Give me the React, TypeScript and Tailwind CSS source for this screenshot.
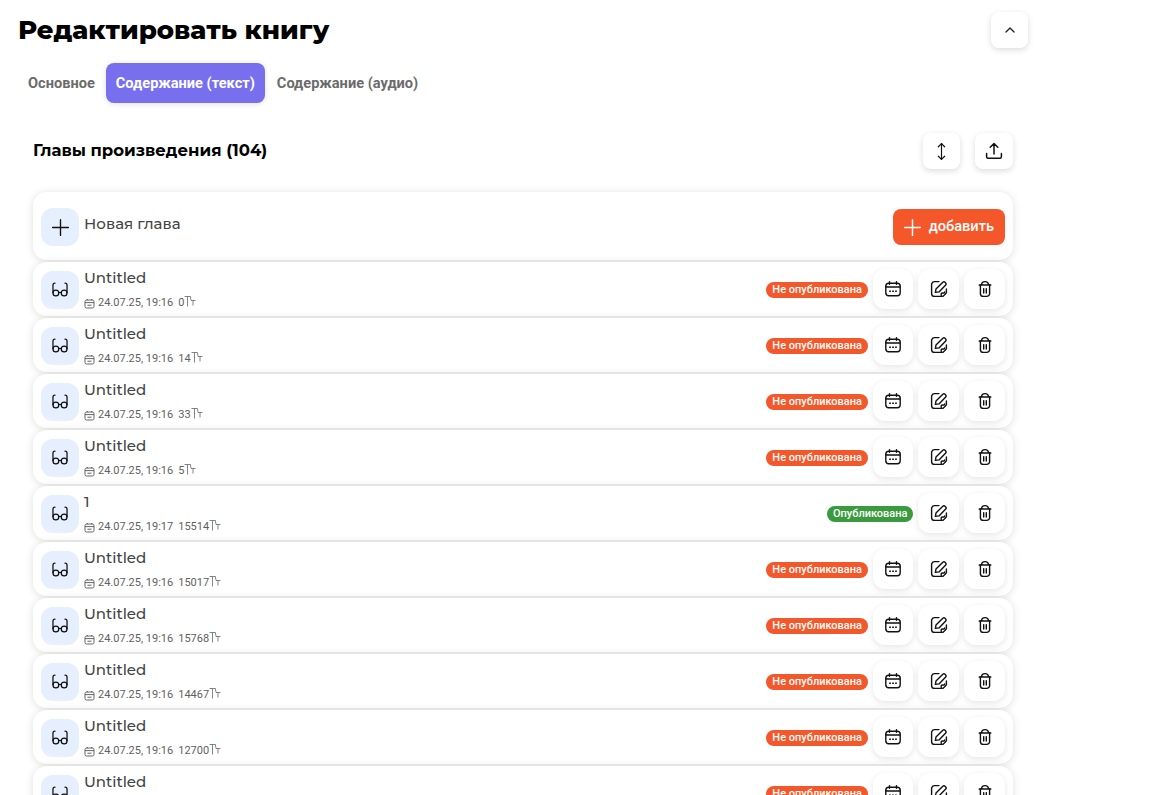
import React from 'react';
import { ChevronUp, Plus, MoveVertical } from 'lucide-react';

const chapters = [
  { title: 'Untitled', time: '19:16', count: '0', published: false },
  { title: 'Untitled', time: '19:16', count: '14', published: false },
  { title: 'Untitled', time: '19:16', count: '33', published: false },
  { title: 'Untitled', time: '19:16', count: '5', published: false },
  { title: '1', time: '19:17', count: '15514', published: true },
  { title: 'Untitled', time: '19:16', count: '15017', published: false },
  { title: 'Untitled', time: '19:16', count: '15768', published: false },
  { title: 'Untitled', time: '19:16', count: '14467', published: false },
  { title: 'Untitled', time: '19:16', count: '12700', published: false },
  { title: 'Untitled', time: '19:16', count: '9120', published: false },
];

const CalendarIcon = () => (
  <svg width="18" height="18" viewBox="0 0 18 18" fill="none" stroke="currentColor" strokeWidth="1.4" strokeLinecap="round">
    <rect x="1.8" y="3.2" width="14.4" height="12.6" rx="3" />
    <path d="M2 7h14M5.5 1.6v2.6M12.5 1.6v2.6" />
    <path d="M6 11.2h.01M9 11.2h.01M12 11.2h.01" strokeWidth="1.8" />
  </svg>
);

const EditIcon = () => (
  <svg width="18" height="18" viewBox="0 0 18 18" fill="none" stroke="currentColor" strokeWidth="1.4" strokeLinecap="round" strokeLinejoin="round">
    <path d="M9 1.6H4.600a3 3 0 0 0-3 3v8.800a3 3 0 0 0 3 3h6.600" />
    <path d="M5.400 12.400l.6-3.400 6.800-6.800a1.600 1.600 0 0 1 2.200 0l.7.7a1.600 1.600 0 0 1 0 2.200L9 11.900z" />
    <path d="M16.400 9v3.200c0 .6-.2 1-.6 1.400l-2.400 2.300c-.4.4-.8.5-1.200.5-.6 0-1-.5-1-1.100v-1.100c0-.7.5-1.200 1.200-1.200h1.100c.6 0 1.100-.4 1.100-1" />
  </svg>
);

const TrashIcon = () => (
  <svg width="18" height="18" viewBox="0 0 18 18" fill="none" stroke="currentColor" strokeWidth="1.4" strokeLinecap="round" strokeLinejoin="round">
    <path d="M3.200 5h11.600M5.600 5c0-2 1.400-3.400 3.400-3.400S12.400 3 12.400 5" />
    <path d="M4.400 5v8.400a3 3 0 0 0 3 3h3.200a3 3 0 0 0 3-3V5" />
    <path d="M7.700 8.600v4.400M10.300 8.600v4.400" />
  </svg>
);

const GlassesIcon = () => (
  <svg width="18" height="18" viewBox="0 0 20 20" fill="none" stroke="currentColor" strokeWidth="1.4" strokeLinecap="round" strokeLinejoin="round">
    <path d="M2.200 13V4.600c0-1.400.8-2.200 2.200-2.200M17.800 13V4.600c0-1.400-.8-2.200-2.200-2.200" />
    <circle cx="5.400" cy="13.400" r="3.200" />
    <circle cx="14.600" cy="13.400" r="3.200" />
    <path d="M8.600 13c.9-.6 1.900-.6 2.800 0" />
  </svg>
);

const UploadIcon = () => (
  <svg width="20" height="20" viewBox="0 0 20 20" fill="none" stroke="currentColor" strokeWidth="1.5" strokeLinecap="round" strokeLinejoin="round">
    <path d="M10 13V2.500M6.200 6.200L10 2.500l3.800 3.700" />
    <path d="M2.600 12.500v3.200c0 .9.600 1.500 1.500 1.500h11.800c.9 0 1.500-.6 1.500-1.500v-3.200" />
  </svg>
);

const SmallCalendar = () => (
  <svg width="11" height="11" viewBox="0 0 11 11" fill="none" stroke="#555" strokeWidth="0.9" className="shrink-0">
    <rect x="1" y="2" width="9" height="8" rx="1.600" />
    <path d="M1 4.600h9M3.200 1v1.400M7.800 1v1.400M3.500 7.200h4" />
  </svg>
);

const SignIcon = () => (
  <svg width="12" height="13" viewBox="0 0 12 13" fill="none" stroke="#666" strokeWidth="0.8" className="-mt-[4px] shrink-0">
    <path d="M0.500 1.500h6M3.500 1.500v10M6.500 1.500c0 2 .3 3.500 1 4M6.800 5.500h4.700M9 5.500v5" />
  </svg>
);

const ActionButton = ({ children, narrow }: { children: React.ReactNode; narrow?: boolean }) => (
  <button
    className={`flex h-10 items-center justify-center rounded-xl bg-white text-[#111] shadow-[0_2px_6px_rgba(0,0,0,0.1)] ${
      narrow ? 'w-10' : 'w-[41px]'
    }`}
  >
    {children}
  </button>
);

const ChapterRow = ({ title, time, count, published }: (typeof chapters)[number]) => (
  <div className="flex h-[54px] shrink-0 items-center rounded-[14px] bg-white px-2 shadow-[0_1px_8px_rgba(0,0,0,0.13)]">
    <div className="mt-[2px] flex h-[38px] w-[38px] shrink-0 items-center justify-center rounded-xl bg-[#e6effd] text-[#111]">
      <GlassesIcon />
    </div>
    <div className="ml-[5px] flex h-[54px] flex-col">
      <div className="mt-[6px] font-['Montserrat','Inter',sans-serif] text-[15px] leading-5 font-medium text-[#444]">{title}</div>
      <div className="mt-[7px] flex items-center gap-[3px] text-[11px] leading-4 text-[#5f5f5f]">
        <SmallCalendar />
        <span className="mr-[2px]">24.07.25, {time}</span>
        <span className="flex items-center">
          {count}
          <SignIcon />
        </span>
      </div>
    </div>
    <div className="ml-auto flex items-center gap-[5px]">
      <span
        className={`mt-[1px] rounded-full text-[11px] leading-4 font-medium text-white ${
          published ? 'bg-[#3a9a3e] px-[5.5px]' : 'bg-[#f4572a] px-[6px]'
        }`}
      >
        {published ? 'Опубликована' : 'Не опубликована'}
      </span>
      {!published && (
        <ActionButton narrow>
          <CalendarIcon />
        </ActionButton>
      )}
      <ActionButton>
        <EditIcon />
      </ActionButton>
      <ActionButton>
        <TrashIcon />
      </ActionButton>
    </div>
  </div>
);

export default function App() {
  return (
    <div className="h-[795px] w-[1162px] overflow-hidden bg-white font-['Roboto',sans-serif]">
      <div className="w-[1028px]">
        {/* Header */}
        <div className="mt-3 ml-[18px] flex h-[36px] items-center justify-between">
          <h1 className="font-['Montserrat','Inter',sans-serif] text-[26px] leading-9 font-extrabold text-black">Редактировать книгу</h1>
          <button className="flex h-9 w-[37px] items-center justify-center rounded-lg bg-white shadow-[0_2px_6px_rgba(0,0,0,0.14)]">
            <ChevronUp size={16} strokeWidth={2} color="#222" />
          </button>
        </div>

        {/* Tabs */}
        <div className="mt-[15px] ml-[18px] flex h-10 items-center text-[14.6px] leading-[22px] font-bold text-[#6b6b6b]">
          <span className="px-[10px]">Основное</span>
          <span className="ml-[1px] flex h-10 items-center rounded-lg bg-[#786fef] px-[10px] text-white shadow-[0_1px_6px_rgba(0,0,0,0.12)]">
            Содержание (текст)
          </span>
          <span className="px-3">Содержание (аудио)</span>
        </div>
      </div>

      {/* Chapters */}
      <div className="ml-[33px] w-[980px]">
        <div className="mt-[30px] flex h-9 items-center justify-between">
          <h2 className="mb-[2px] font-['Montserrat','Inter',sans-serif] text-[16.5px] font-bold text-black">Главы произведения (104)</h2>
          <div className="flex gap-[15px]">
            <button className="flex h-9 w-[37px] items-center justify-center rounded-lg bg-white text-[#111] shadow-[0_2px_6px_rgba(0,0,0,0.14)]">
              <MoveVertical size={19} strokeWidth={1.5} />
            </button>
            <button className="flex h-9 w-[38px] items-center justify-center rounded-lg bg-white text-[#111] shadow-[0_2px_6px_rgba(0,0,0,0.14)]">
              <UploadIcon />
            </button>
          </div>
        </div>

        <div className="mt-[23px] flex flex-col gap-[2px]">
          <div className="flex h-[68px] items-center rounded-[14px] bg-white px-2 shadow-[0_1px_8px_rgba(0,0,0,0.13)]">
            <div className="mt-[2px] flex h-[38px] w-[38px] items-center justify-center rounded-xl bg-[#e6effd] text-[#111]">
              <Plus size={27} strokeWidth={1.2} />
            </div>
            <span className="mb-[3px] ml-[5px] font-['Montserrat','Inter',sans-serif] text-[15px] font-medium text-[#444]">Новая глава</span>
            <button className="mt-[2px] ml-auto flex h-9 items-center gap-[3px] rounded-lg bg-[#f4572a] pr-[11px] pl-[6px] text-[14.6px] font-medium text-white">
              <Plus size={27} strokeWidth={1.3} />
              добавить
            </button>
          </div>
          {chapters.map((c, i) => (
            <ChapterRow key={i} {...c} />
          ))}
        </div>
      </div>
    </div>
  );
}
